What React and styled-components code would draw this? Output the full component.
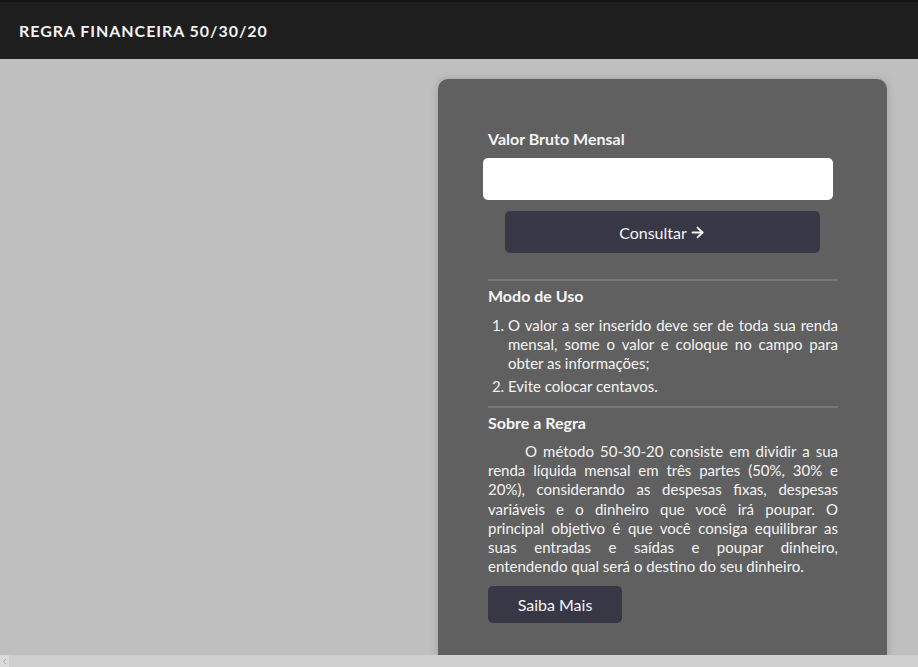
import React from "react";
import styled, { createGlobalStyle } from "styled-components";
import { ArrowRight, ChevronLeft } from "lucide-react";

const Global = createGlobalStyle`
  html { overflow: hidden; }
  body {
    margin: 0;
    background: #bfbfbf;
    font-family: Lato, "Open Sans", sans-serif;
  }
  * { box-sizing: border-box; }
`;

const Header = styled.header`
  height: 59px;
  background: #1e1e1e;
  border-top: 2px solid #121412;
  display: flex;
  align-items: center;
  padding: 0 19px 1px;
`;

const Title = styled.h1`
  margin: 0;
  font-size: 16px;
  font-weight: 700;
  letter-spacing: 0.95px;
  color: #f2f2f2;
`;

const Main = styled.main`
  display: flex;
  justify-content: flex-end;
  padding: 20px 31px 0 0;
`;

const Card = styled.section`
  width: 449px;
  min-height: 600px;
  background: #606060;
  border-radius: 10px;
  box-shadow: 0 0 8px rgba(0, 0, 0, 0.18);
  padding: 50px 49px 30px 50px;
  color: #f4f4f4;
`;

const Label = styled.label`
  display: block;
  font-size: 16px;
  font-weight: 700;
  margin-bottom: 10px;
`;

const Input = styled.input`
  display: block;
  width: 350px;
  height: 42px;
  margin-left: -5px;
  border: none;
  border-radius: 5px;
  background: #fff;
  outline: none;
  font: inherit;
`;

const Button = styled.button`
  display: flex;
  align-items: center;
  justify-content: center;
  gap: 2px;
  height: ${(p) => p.$h}px;
  width: ${(p) => p.$w}px;
  margin: ${(p) => p.$m};
  border: none;
  border-radius: 5px;
  background: #383746;
  color: #f4f4f4;
  font-family: Lato, sans-serif;
  font-size: 16px;
  font-weight: 400;
`;

const Divider = styled.hr`
  border: none;
  height: 2px;
  background: #777;
  margin: ${(p) => p.$m};
`;

const Heading = styled.h2`
  margin: 0;
  font-size: 16px;
  font-weight: 700;
`;

const List = styled.ol`
  margin: 11px 0 0;
  padding-left: 20px;
  font-size: 15px;
  line-height: 19px;
  text-align: justify;
  li + li { margin-top: 4px; }
`;

const Paragraph = styled.p`
  margin: 10px 0 0;
  font-size: 15px;
  line-height: 19.2px;
  text-align: justify;
  text-indent: 37px;
`;

/* browser's horizontal scrollbar, drawn over the page bottom */
const Scrollbar = styled.div`
  position: fixed;
  left: 0;
  right: 0;
  bottom: 0;
  height: 12px;
  background: #cfcfcf;
  display: flex;
`;

const ScrollArrow = styled.div`
  width: 9px;
  height: 12px;
  background: #dadada;
  color: #9a9a9a;
  display: flex;
  align-items: center;
  justify-content: center;
`;

export default function App() {
  return (
    <>
      <Global />
      <Header>
        <Title>REGRA FINANCEIRA 50/30/20</Title>
      </Header>
      <Main>
        <Card>
          <Label htmlFor="valor">Valor Bruto Mensal</Label>
          <Input id="valor" type="text" />
          <Button $w={315} $h={42} $m="11px 0 0 17px">
            Consultar <ArrowRight size={17} strokeWidth={2.6} />
          </Button>
          <Divider $m="26px 0 5px" />
          <Heading>Modo de Uso</Heading>
          <List>
            <li>
              O valor a ser inserido deve ser de toda sua renda mensal, some o
              valor e coloque no campo para obter as informações;
            </li>
            <li>Evite colocar centavos.</li>
          </List>
          <Divider $m="10px 0 5px" />
          <Heading>Sobre a Regra</Heading>
          <Paragraph>
            O método 50-30-20 consiste em dividir a sua renda líquida mensal em
            três partes (50%, 30% e 20%), considerando as despesas fixas,
            despesas variáveis e o dinheiro que você irá poupar. O principal
            objetivo é que você consiga equilibrar as suas entradas e saídas e
            poupar dinheiro, entendendo qual será o destino do seu dinheiro.
          </Paragraph>
          <Button $w={134} $h={37} $m="10px 0 0 0">
            Saiba Mais
          </Button>
        </Card>
      </Main>
      <Scrollbar>
        <ScrollArrow>
          <ChevronLeft size={9} strokeWidth={2} />
        </ScrollArrow>
      </Scrollbar>
    </>
  );
}
